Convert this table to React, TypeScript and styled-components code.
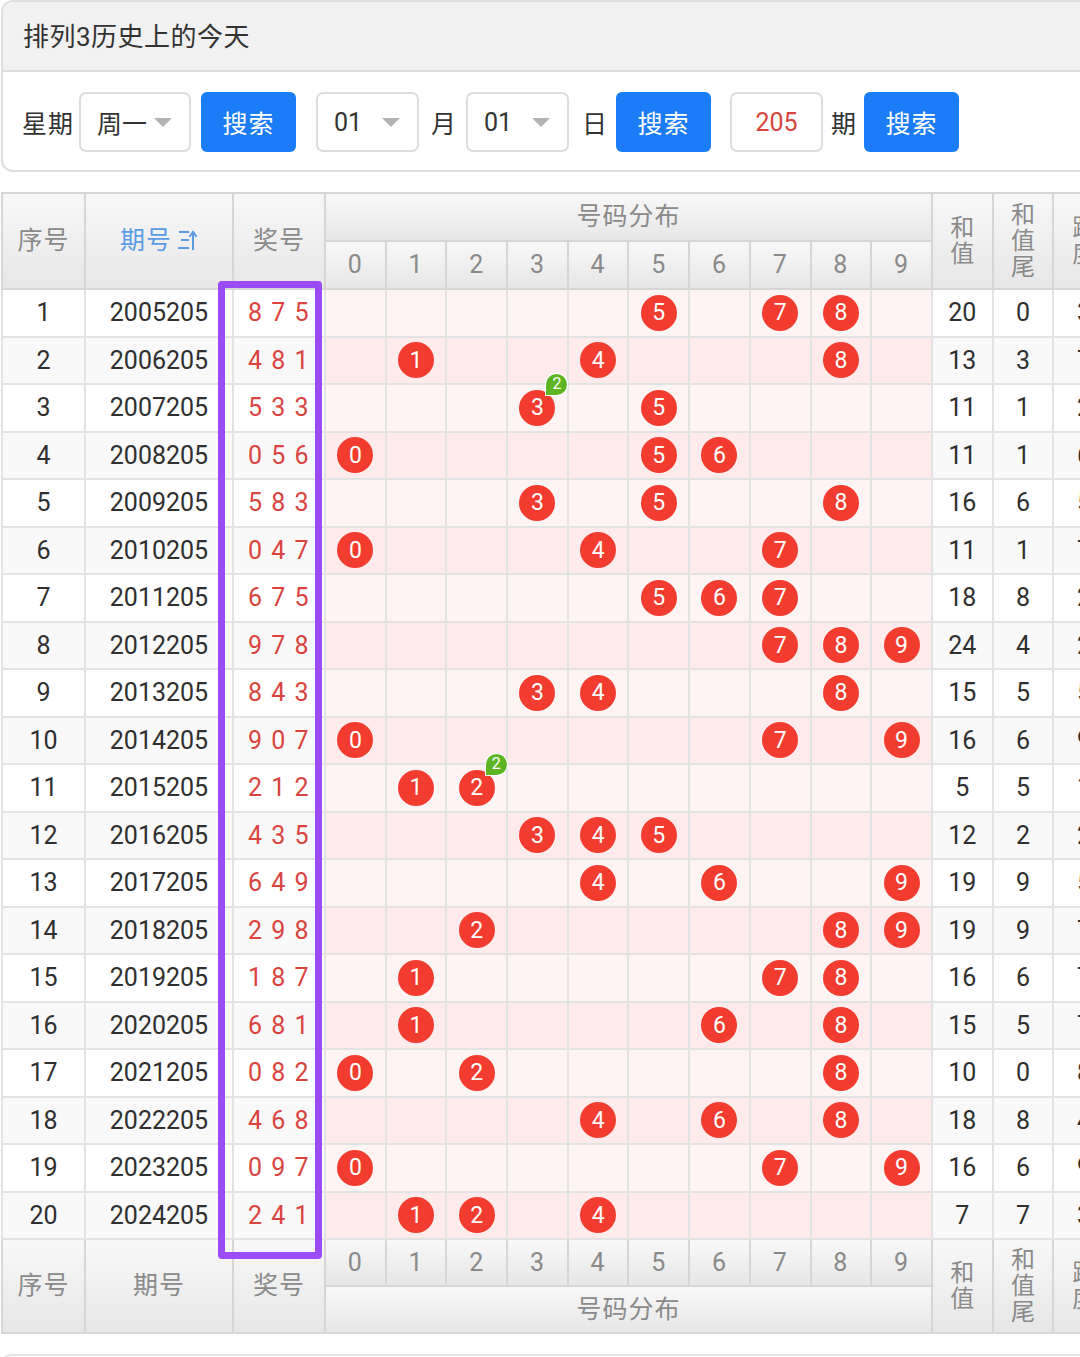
import React from "react";
import styled, { createGlobalStyle, css } from "styled-components";

const GlobalStyle = createGlobalStyle`
  html, body {
    margin: 0;
    padding: 0;
    background: #ffffff;
    overflow: hidden;
  }
  body {
    font-family: Roboto, "Noto Sans", "Noto Sans CJK SC", sans-serif;
    color: #333;
  }
  * { box-sizing: border-box; }
`;

const FONT = `Roboto, "Noto Sans", "Noto Sans CJK SC", sans-serif`;

const Page = styled.div`
  width: 1150px;
  padding-left: 1px;
`;

const Card = styled.div`
  border: 2px solid #dedede;
  border-radius: 12px;
  overflow: hidden;
  background: #fff;
`;

const CardHead = styled.div`
  height: 70px;
  background: #f1f1f1;
  border-bottom: 2px solid #dcdcdc;
  display: flex;
  align-items: center;
  padding-left: 20px;
  padding-bottom: 3px;
  font-size: 26px;
  letter-spacing: 0.5px;
  color: #333;
  font-family: ${FONT};
`;

const CardBody = styled.div`
  height: 98px;
  display: flex;
  align-items: center;
  padding-left: 19px;
  padding-top: 2px;
`;

const Label = styled.span<{ $ml?: number; $mr?: number }>`
  font-size: 25px;
  color: #333;
  margin-left: ${(p) => p.$ml ?? 0}px;
  margin-right: ${(p) => p.$mr ?? 0}px;
  font-family: ${FONT};
  white-space: nowrap;
  letter-spacing: 1px;
`;

const SelectBox = styled.div<{ $w: number; $ml?: number }>`
  width: ${(p) => p.$w}px;
  height: 60px;
  margin-left: ${(p) => p.$ml ?? 0}px;
  border: 2px solid #dddddd;
  border-radius: 7px;
  display: flex;
  align-items: center;
  justify-content: space-between;
  padding: 0 17px 0 16px;
  font-size: 25px;
  color: #333;
  font-family: ${FONT};
`;

const Caret = styled.span`
  width: 0;
  height: 0;
  border-left: 9px solid transparent;
  border-right: 9px solid transparent;
  border-top: 9px solid #b3b3b3;
`;

const Button = styled.button<{ $ml?: number }>`
  width: 95px;
  height: 60px;
  margin-left: ${(p) => p.$ml ?? 0}px;
  border: none;
  border-radius: 6px;
  background: #1a7cf6;
  color: #fff;
  font-size: 25px;
  letter-spacing: 1px;
  font-family: ${FONT};
  padding: 0;
`;

const InputBox = styled.div<{ $ml?: number }>`
  width: 93px;
  height: 60px;
  margin-left: ${(p) => p.$ml ?? 0}px;
  border: 2px solid #dddddd;
  border-radius: 7px;
  display: flex;
  align-items: center;
  justify-content: center;
  font-size: 25px;
  color: #d7463f;
  font-family: ${FONT};
`;

const TableWrap = styled.div`
  position: relative;
  margin-top: 20px;
`;

const Table = styled.table`
  border-collapse: collapse;
  table-layout: fixed;
  width: 1113px;
  font-family: ${FONT};
`;

const headBg = css`
  background: linear-gradient(#f8f8f8, #e7e7e7);
`;

const Th = styled.th<{ $blue?: boolean; $small?: boolean }>`
  ${headBg};
  border: 2px solid #d6d6d6;
  font-weight: 400;
  font-size: ${(p) => (p.$small ? 24 : 25)}px;
  color: ${(p) => (p.$blue ? "#5c9ce6" : "#8a8a8a")};
  text-align: center;
  padding: 0;
  line-height: 26px;
  white-space: nowrap;
  letter-spacing: 1px;
`;

const HeadRow = styled.tr`
  height: 48px;
`;

const FootRow = styled.tr`
  height: 47px;
`;

const BodyRow = styled.tr`
  height: 47.5px;
`;

const Td = styled.td<{ $alt: boolean; $zone?: "pink" | "plain"; $red?: boolean }>`
  border: 2px solid #e3e3e3;
  padding: 0;
  text-align: center;
  font-size: 25px;
  color: ${(p) => (p.$red ? "#d9443f" : "#2f2f2f")};
  letter-spacing: ${(p) => (p.$red ? "1.5px" : "0")};
  white-space: nowrap;
  background: ${(p) =>
    p.$zone === "pink"
      ? p.$alt
        ? "#ffebeb"
        : "#fff4f4"
      : p.$alt
      ? "#f9f9f9"
      : "#ffffff"};
`;

const Ball = styled.span`
  position: relative;
  display: inline-flex;
  align-items: center;
  justify-content: center;
  width: 36px;
  height: 36px;
  border-radius: 50%;
  background: #f23c30;
  color: #fff;
  font-size: 23px;
  line-height: 1;
  vertical-align: middle;
`;

const Badge = styled.span`
  position: absolute;
  top: -16px;
  left: 27px;
  width: 21px;
  height: 21px;
  border-radius: 50% 50% 50% 0;
  background: #5db524;
  box-shadow: 0 0 0 1px #fff;
  color: #fff;
  font-size: 16px;
  display: flex;
  align-items: center;
  justify-content: center;
  line-height: 1;
`;

const Stack = styled.span`
  display: inline-block;
  width: 1em;
  white-space: normal;
  word-break: break-all;
  line-height: 26px;
  letter-spacing: 0;
`;

const Highlight = styled.div`
  position: absolute;
  left: 217px;
  top: 89px;
  width: 104px;
  height: 978px;
  border: 7px solid #9b4cf6;
  border-radius: 4px;
  pointer-events: none;
`;

const NextCard = styled.div`
  margin-top: 20px;
  height: 10px;
  border-top: 2px solid #e3e3e3;
  border-left: 2px solid #e3e3e3;
  border-top-left-radius: 12px;
`;

const SortIcon = () => (
  <svg width="20" height="24" viewBox="0 0 20 24" style={{ verticalAlign: "-3px", marginLeft: 6 }}>
    <g stroke="#5c9ce6" strokeWidth="2" fill="none" strokeLinecap="square">
      <line x1="2" y1="4" x2="10" y2="4" />
      <line x1="4" y1="12" x2="10" y2="12" />
      <line x1="1" y1="20" x2="10" y2="20" />
      <line x1="15" y1="4" x2="15" y2="21" />
      <polyline points="12,8 15,4 18,8" />
    </g>
  </svg>
);

const data: [string, string][] = [
  ["2005205", "875"],
  ["2006205", "481"],
  ["2007205", "533"],
  ["2008205", "056"],
  ["2009205", "583"],
  ["2010205", "047"],
  ["2011205", "675"],
  ["2012205", "978"],
  ["2013205", "843"],
  ["2014205", "907"],
  ["2015205", "212"],
  ["2016205", "435"],
  ["2017205", "649"],
  ["2018205", "298"],
  ["2019205", "187"],
  ["2020205", "681"],
  ["2021205", "082"],
  ["2022205", "468"],
  ["2023205", "097"],
  ["2024205", "241"],
];

const digits = [0, 1, 2, 3, 4, 5, 6, 7, 8, 9];

export default function App() {
  return (
    <Page>
      <GlobalStyle />
      <Card>
        <CardHead>排列3历史上的今天</CardHead>
        <CardBody>
          <Label>星期</Label>
          <SelectBox $w={112} $ml={5}>
            <span>周一</span>
            <Caret />
          </SelectBox>
          <Button $ml={10}>搜索</Button>
          <SelectBox $w={103} $ml={20}>
            <span>01</span>
            <Caret />
          </SelectBox>
          <Label $ml={12} $mr={9}>月</Label>
          <SelectBox $w={103}>
            <span>01</span>
            <Caret />
          </SelectBox>
          <Label $ml={13} $mr={8}>日</Label>
          <Button>搜索</Button>
          <InputBox $ml={19}>205</InputBox>
          <Label $ml={8} $mr={7}>期</Label>
          <Button>搜索</Button>
        </CardBody>
      </Card>

      <TableWrap>
        <Table>
          <colgroup>
            <col style={{ width: 83 }} />
            <col style={{ width: 148 }} />
            <col style={{ width: 92 }} />
            {digits.map((d) => (
              <col key={d} style={{ width: 60.7 }} />
            ))}
            <col style={{ width: 60.6 }} />
            <col style={{ width: 60.8 }} />
            <col style={{ width: 61.6 }} />
          </colgroup>
          <thead>
            <HeadRow>
              <Th rowSpan={2}>序号</Th>
              <Th rowSpan={2} $blue>
                期号
                <SortIcon />
              </Th>
              <Th rowSpan={2}>奖号</Th>
              <Th colSpan={10}>号码分布</Th>
              <Th rowSpan={2} $small>
                <Stack>和值</Stack>
              </Th>
              <Th rowSpan={2} $small>
                <Stack>和值尾</Stack>
              </Th>
              <Th rowSpan={2} $small>
                <Stack>跨度</Stack>
              </Th>
            </HeadRow>
            <HeadRow>
              {digits.map((d) => (
                <Th key={d}>{d}</Th>
              ))}
            </HeadRow>
          </thead>
          <tbody>
            {data.map(([issue, code], i) => {
              const nums = code.split("").map(Number);
              const alt = i % 2 === 1;
              const sum = nums.reduce((a, b) => a + b, 0);
              const span = Math.max(...nums) - Math.min(...nums);
              return (
                <BodyRow key={issue}>
                  <Td $alt={alt}>{i + 1}</Td>
                  <Td $alt={alt}>{issue}</Td>
                  <Td $alt={alt} $red>
                    {nums.join(" ")}
                  </Td>
                  {digits.map((d) => {
                    const count = nums.filter((n) => n === d).length;
                    return (
                      <Td key={d} $alt={alt} $zone="pink">
                        {count > 0 && (
                          <Ball>
                            {d}
                            {count > 1 && <Badge>{count}</Badge>}
                          </Ball>
                        )}
                      </Td>
                    );
                  })}
                  <Td $alt={alt}>{sum}</Td>
                  <Td $alt={alt}>{sum % 10}</Td>
                  <Td $alt={alt}>{span}</Td>
                </BodyRow>
              );
            })}
          </tbody>
          <tfoot>
            <FootRow>
              <Th rowSpan={2}>序号</Th>
              <Th rowSpan={2}>期号</Th>
              <Th rowSpan={2}>奖号</Th>
              {digits.map((d) => (
                <Th key={d}>{d}</Th>
              ))}
              <Th rowSpan={2} $small>
                <Stack>和值</Stack>
              </Th>
              <Th rowSpan={2} $small>
                <Stack>和值尾</Stack>
              </Th>
              <Th rowSpan={2} $small>
                <Stack>跨度</Stack>
              </Th>
            </FootRow>
            <FootRow>
              <Th colSpan={10}>号码分布</Th>
            </FootRow>
          </tfoot>
        </Table>
        <Highlight />
      </TableWrap>
      <NextCard />
    </Page>
  );
}
